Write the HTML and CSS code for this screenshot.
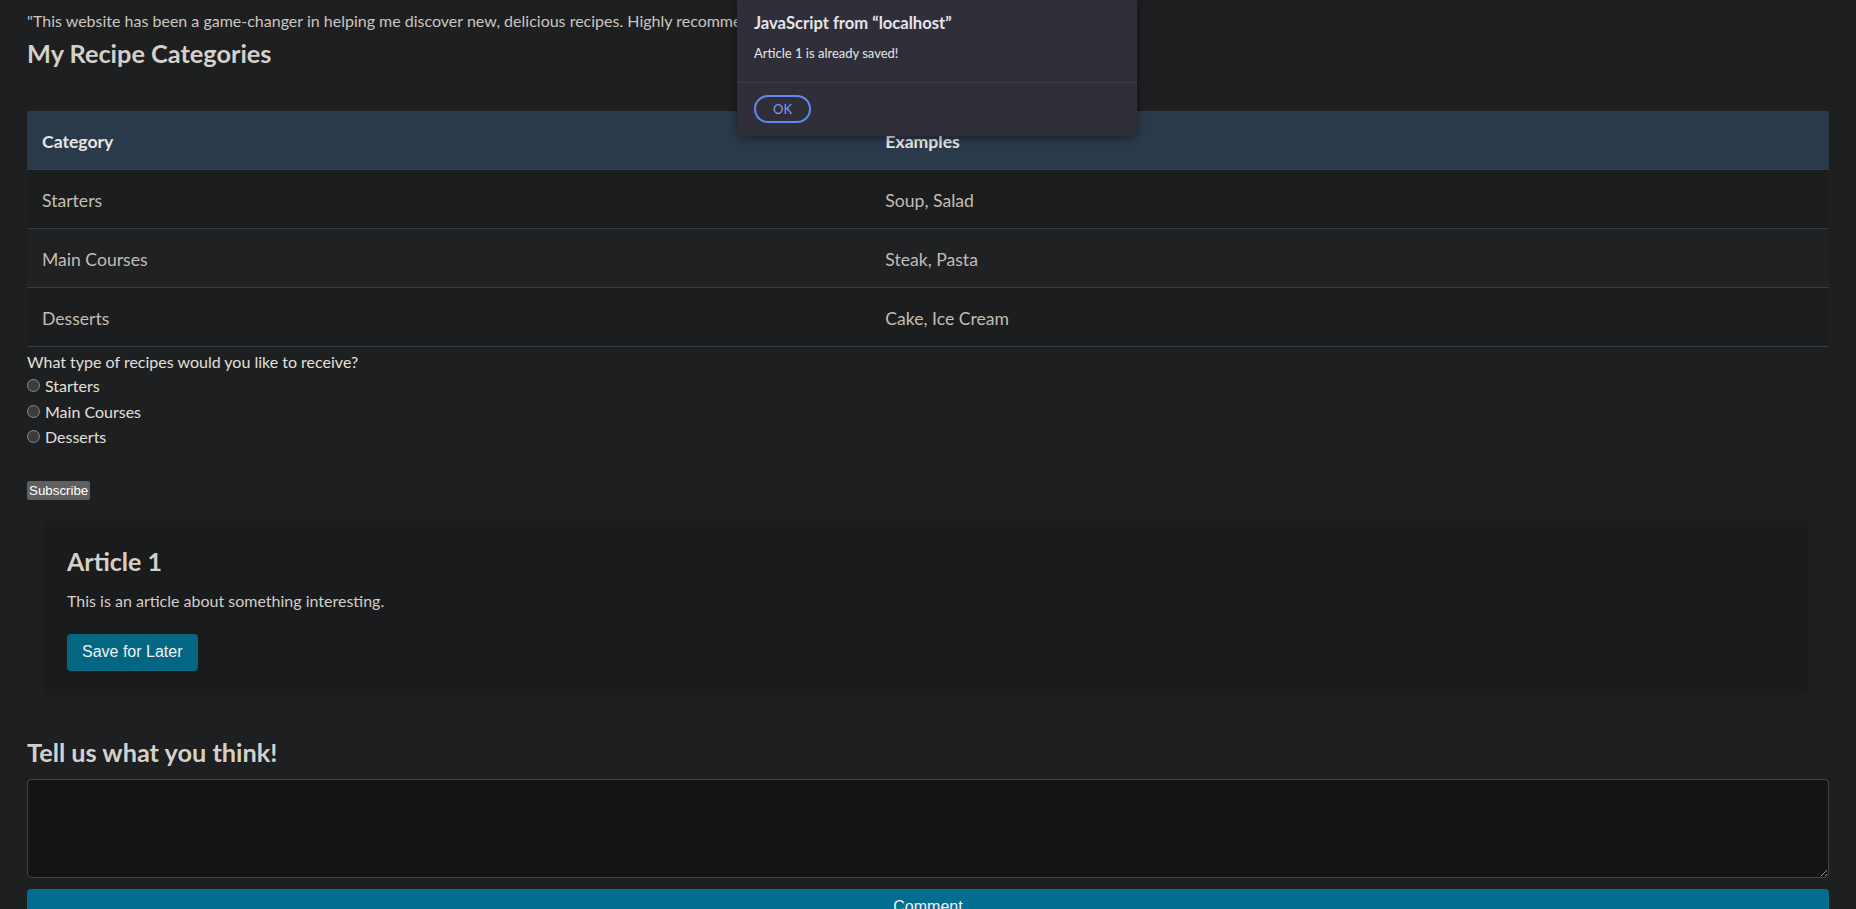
FILE: index.html
```html
<!DOCTYPE html>
<html lang="en">
<head>
<meta charset="utf-8">
<title>Recipes</title>
<link rel="stylesheet" href="styles.css">
</head>
<body>
<main class="page">
  <p class="quote">"This website has been a game-changer in helping me discover new, delicious recipes. Highly recommended!" - Sarah Johnson</p>

  <h2 class="section-title">My Recipe Categories</h2>

  <table class="cat-table">
    <thead>
      <tr><th class="col-cat">Category</th><th>Examples</th></tr>
    </thead>
    <tbody>
      <tr><td>Starters</td><td>Soup, Salad</td></tr>
      <tr class="alt"><td>Main Courses</td><td>Steak, Pasta</td></tr>
      <tr><td>Desserts</td><td>Cake, Ice Cream</td></tr>
    </tbody>
  </table>

  <form class="sub-form">
    <p class="question">What type of recipes would you like to receive?</p>
    <label class="opt"><input type="radio" name="type" class="radio"><span>Starters</span></label>
    <label class="opt"><input type="radio" name="type" class="radio"><span>Main Courses</span></label>
    <label class="opt"><input type="radio" name="type" class="radio"><span>Desserts</span></label>
    <button type="button" class="sub-btn">Subscribe</button>
  </form>

  <article class="card">
    <h3 class="card-title">Article 1</h3>
    <p class="card-text">This is an article about something interesting.</p>
    <button type="button" class="save-btn">Save for Later</button>
  </article>

  <h2 class="section-title feedback-title">Tell us what you think!</h2>
  <textarea class="comment-box"></textarea>
  <button type="button" class="comment-btn">Comment</button>
</main>

<div class="dialog">
  <div class="dialog-body">
    <div class="dialog-title">JavaScript from “localhost”</div>
    <div class="dialog-msg">Article 1 is already saved!</div>
  </div>
  <div class="dialog-foot">
    <button type="button" class="ok-btn">OK</button>
  </div>
</div>
</body>
</html>
```

FILE: styles.css
```css
html, body {
  margin: 0;
  padding: 0;
  background: #1e1f21;
}
body {
  font-family: Lato, "Open Sans", "Liberation Sans", sans-serif;
  color: #cdc8c1;
  font-size: 16px;
}
.page {
  padding: 10px 27px 40px;
}
.quote {
  margin: 0;
  line-height: 22px;
  white-space: nowrap;
  overflow: hidden;
  color: #cbc6bf;
}
.section-title {
  margin: 5px 0 42px;
  font-size: 25.3px;
  line-height: 32px;
  font-weight: 700;
  color: #d4d0ca;
}
.cat-table {
  width: 100%;
  border-collapse: collapse;
  font-size: 17.6px;
}
.cat-table th {
  background: #2b3a4a;
  color: #e8e6e3;
  font-weight: 700;
  text-align: left;
  padding: 18px 15px 14px;
  line-height: 26px;
  border-bottom: 1px solid #3a3d40;
}
.cat-table .col-cat {
  width: 46.8%;
}
.cat-table td {
  padding: 18px 15px 14px;
  line-height: 26px;
  color: #c2bdb5;
  border-bottom: 1px solid #3a3d40;
  background: #1c1d1f;
}
.cat-table tr.alt td {
  background: #1f2123;
}
.sub-form {
  margin-top: 4px;
  display: flex;
  flex-direction: column;
  align-items: flex-start;
}
.question {
  margin: 0;
  line-height: 22px;
  color: #e3e0db;
}
.opt {
  display: flex;
  align-items: center;
  gap: 5px;
  height: 25.5px;
  color: #e3e0db;
}
.radio {
  appearance: none;
  -webkit-appearance: none;
  margin: 0;
  width: 13px;
  height: 13px;
  border-radius: 50%;
  border: 1px solid #8a8a8a;
  background: #3c3c3c;
  box-sizing: border-box;
}
.sub-btn {
  margin-top: 31px;
  height: 19px;
  padding: 0 2px;
  border: none;
  border-radius: 2px;
  background: #5f5f5f;
  color: #ffffff;
  font-family: "Liberation Sans", Arial, sans-serif;
  font-size: 13.33px;
}
.card {
  margin: 21px 21px 0 18px;
  padding: 24px 22px 23px;
  background: #1a1b1d;
  border-radius: 8px;
  box-shadow: 0 0 6px rgba(0, 0, 0, 0.15);
}
.card-title {
  margin: 0;
  font-size: 25px;
  line-height: 32px;
  font-weight: 700;
  color: #d4d0ca;
}
.card-text {
  margin: 13px 0 0;
  line-height: 22px;
  color: #d2cec8;
}
.save-btn {
  margin-top: 22px;
  height: 37px;
  padding: 0 15px;
  border: none;
  border-radius: 4px;
  background: #036683;
  color: #f2f2f2;
  font-family: "Liberation Sans", Arial, sans-serif;
  font-size: 16px;
}
.feedback-title {
  margin: 42px 0 11px;
}
.comment-box {
  display: block;
  width: 100%;
  height: 99px;
  box-sizing: border-box;
  background: #141414;
  border: 1px solid #3f4144;
  border-radius: 4px;
  color: #e0e0e0;
  resize: vertical;
}
.comment-btn {
  display: block;
  width: 100%;
  margin-top: 11px;
  height: 36px;
  border: none;
  border-radius: 4px;
  background: #036e92;
  color: #f2f2f2;
  font-family: "Liberation Sans", Arial, sans-serif;
  font-size: 16px;
}
.dialog {
  position: absolute;
  left: 737px;
  top: 0;
  width: 400px;
  height: 136px;
  background: #302f39;
  border-radius: 0 0 8px 8px;
  box-shadow: 0 2px 10px rgba(0, 0, 0, 0.45);
  display: flex;
  flex-direction: column;
  font-family: Lato, "Open Sans", sans-serif;
}
.dialog-body {
  height: 83px;
  box-sizing: border-box;
  padding: 12px 17px 0;
  border-bottom: 1px solid #3d3c47;
}
.dialog-title {
  font-size: 16.6px;
  font-weight: 700;
  line-height: 22px;
  color: #e6e5ea;
}
.dialog-msg {
  margin-top: 9px;
  font-size: 13px;
  line-height: 20px;
  color: #e6e5ea;
}
.dialog-foot {
  padding: 12px 17px 0;
}
.ok-btn {
  width: 57px;
  height: 28px;
  border: 2px solid #6287f0;
  border-radius: 14px;
  background: transparent;
  color: #7e9cf4;
  font-family: Lato, "Open Sans", sans-serif;
  font-size: 13px;
  padding: 0;
}
```
